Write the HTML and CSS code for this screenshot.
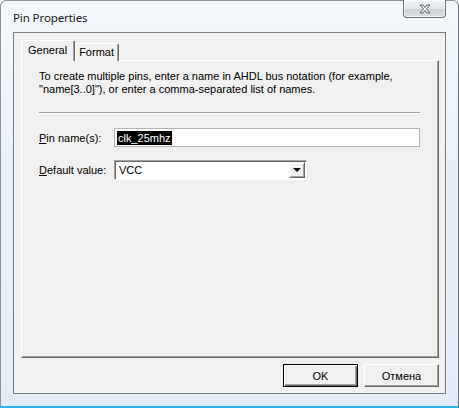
FILE: index.html
```html
<!DOCTYPE html>
<html lang="en">
<head>
  <meta charset="UTF-8">
  <title>Pin Properties</title>
  <link rel="stylesheet" href="styles.css">
</head>
<body>
  <div class="window">
    <div class="titlebar">
      <span class="title">Pin Properties</span>
      <button class="close-btn" aria-label="Close">
        <svg width="16" height="10" viewBox="0 0 16 10">
          <path d="M3 1 L6 1 L8 3.5 L10 1 L13 1 L9.5 5 L13 9 L10 9 L8 6.5 L6 9 L3 9 L6.5 5 Z" fill="#fafafa" stroke="#5a5f66" stroke-width="1"/>
        </svg>
      </button>
    </div>

    <div class="client">
      <div class="tabs">
        <div class="tab active">General</div>
        <div class="tab">Format</div>
      </div>

      <div class="panel">
        <p class="hint">To create multiple pins, enter a name in AHDL bus notation (for example,<br>"name[3..0]"), or enter a comma-separated list of names.</p>
        <div class="separator"></div>

        <div class="row">
          <label class="field-label"><u>P</u>in name(s):</label>
          <div class="textbox"><span class="selected">clk_25mhz</span></div>
        </div>

        <div class="row">
          <label class="field-label"><u>D</u>efault value:</label>
          <div class="combo">
            <span class="combo-value">VCC</span>
            <span class="combo-arrow"><span class="tri"></span></span>
          </div>
        </div>
      </div>

      <div class="buttons">
        <button class="btn default">OK</button>
        <button class="btn">Отмена</button>
      </div>
    </div>
  </div>
</body>
</html>
```

FILE: styles.css
```css
body {
  margin: 0;
  background: #ffffff;
  font-family: 'Liberation Sans', Arial, sans-serif;
  font-size: 11px;
  color: #000000;
}

.window {
  position: relative;
  width: 459px;
  height: 408px;
  box-sizing: border-box;
  display: flex;
  flex-direction: column;
  padding: 0 12px 12px 12px;
  border-left: 1px solid #8a949e;
  border-right: 1px solid #6f7780;
  border-top: 1px solid #8a949e;
  border-bottom: 2px solid #2fb3e6;
  border-radius: 6px 6px 0 0;
  background: linear-gradient(to bottom, #f4f8fc 0%, #e9f0f7 40%, #e3ecf5 100%);
}

.titlebar {
  height: 31px;
  display: flex;
  align-items: flex-start;
}

.title {
  font-family: 'Noto Sans', 'Open Sans', sans-serif;
  font-size: 11.5px;
  letter-spacing: -0.1px;
  margin-top: 9px;
  color: #1a1a1a;
}

.close-btn {
  position: absolute;
  top: -1px;
  right: 12px;
  width: 43px;
  height: 18px;
  padding: 0;
  border: 1px solid #6d737a;
  border-top: none;
  border-radius: 0 0 4px 4px;
  background: linear-gradient(to bottom, #f2f4f6 0%, #e2e5e9 50%, #cdd1d6 51%, #dde0e4 100%);
  display: flex;
  align-items: center;
  justify-content: center;
  box-shadow: inset 0 0 0 1px rgba(255, 255, 255, 0.6);
}

.client {
  flex: 1;
  background: #f0f0f0;
  border: 1px solid #7a7f85;
  display: flex;
  flex-direction: column;
  padding: 7px 6px 0 7px;
}

.tabs {
  display: flex;
  align-items: flex-end;
  height: 20px;
  position: relative;
  z-index: 1;
}

.tab {
  height: 17px;
  padding: 0 4px 0 3px;
  line-height: 17px;
  background: #f0f0f0;
  border-top: 1px solid #ffffff;
  border-left: 1px solid #ffffff;
  border-right: 1px solid #696969;
  box-shadow: inset -1px 0 0 #a0a0a0;
  border-radius: 2px 2px 0 0;
  margin-bottom: -1px;
}

.tab.active {
  height: 20px;
  line-height: 18px;
  padding: 0 7px 0 6px;
}

.panel {
  height: 298px;
  box-sizing: border-box;
  border-top: 1px solid #ffffff;
  border-left: 1px solid #ffffff;
  border-right: 1px solid #696969;
  border-bottom: 1px solid #696969;
  box-shadow: inset -1px -1px 0 #a0a0a0;
  padding: 9px 18px 0 17px;
}

.hint {
  margin: 0;
  line-height: 13px;
}

.separator {
  margin-top: 16px;
  height: 1px;
  background: #a0a0a0;
  border-bottom: 1px solid #ffffff;
}

.row {
  display: flex;
  align-items: center;
  margin-top: 14px;
}

.row + .row {
  margin-top: 13px;
}

.field-label {
  width: 75px;
}

.textbox {
  flex: 1;
  height: 19px;
  box-sizing: border-box;
  background: #ffffff;
  border: 1px solid #b4b4b4;
  display: flex;
  align-items: center;
  padding-left: 2px;
}

.selected {
  background: #000000;
  color: #ffffff;
  line-height: 14px;
  padding: 0 1px;
}

.combo {
  width: 193px;
  height: 20px;
  box-sizing: border-box;
  background: #ffffff;
  border-top: 1px solid #a0a0a0;
  border-left: 1px solid #a0a0a0;
  border-right: 1px solid #ffffff;
  border-bottom: 1px solid #ffffff;
  box-shadow: inset 1px 1px 0 #696969;
  display: flex;
  align-items: center;
  padding: 1px 1px 1px 4px;
}

.combo-value {
  flex: 1;
}

.combo-arrow {
  width: 16px;
  height: 16px;
  box-sizing: border-box;
  background: #f0f0f0;
  border-top: 1px solid #f0f0f0;
  border-left: 1px solid #f0f0f0;
  border-right: 1px solid #696969;
  border-bottom: 1px solid #696969;
  box-shadow: inset 1px 1px 0 #ffffff, inset -1px -1px 0 #a0a0a0;
  display: flex;
  align-items: center;
  justify-content: center;
}

.tri {
  width: 0;
  height: 0;
  border-left: 4px solid transparent;
  border-right: 4px solid transparent;
  border-top: 4px solid #000000;
}

.buttons {
  display: flex;
  justify-content: flex-end;
  gap: 6px;
  margin-top: 6px;
}

.btn {
  width: 75px;
  height: 23px;
  font-family: 'Liberation Sans', Arial, sans-serif;
  font-size: 11px;
  color: #000000;
  background: #f0f0f0;
  border-top: 1px solid #ffffff;
  border-left: 1px solid #ffffff;
  border-right: 1px solid #696969;
  border-bottom: 1px solid #696969;
  box-shadow: inset -1px -1px 0 #a0a0a0;
  padding: 0;
}

.btn.default {
  border: 1px solid #000000;
  box-shadow: inset 1px 1px 0 #ffffff, inset -1px -1px 0 #696969, inset -2px -2px 0 #a0a0a0;
}
```
